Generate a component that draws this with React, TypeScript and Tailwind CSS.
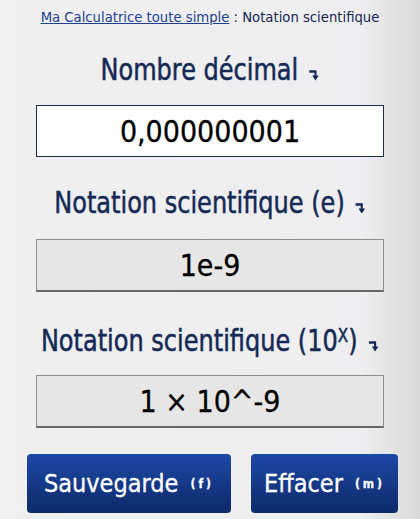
const cond = { fontFamily: '"DejaVu Sans Condensed", "DejaVu Sans", sans-serif' };

function TurnArrow() {
    return (
        <svg width="12" height="11" viewBox="0 0 12 11" className="ml-[12px] mt-[10px] inline-block shrink-0" fill="none">
            <path d="M0.5 1.5 H7.5 V7" stroke="#142a55" strokeWidth="2.4" />
            <path d="M3.8 5.6 L7.5 10.5 L11.2 5.6 Z" fill="#142a55" />
        </svg>
    );
}

function Heading({ children }: { children: React.ReactNode }) {
    return (
        <h2 className="flex h-[40px] items-center justify-center text-[30px] leading-[40px] text-[#142a55] [-webkit-text-stroke:0.5px_#142a55]">
            <span className="flex scale-x-[0.89] items-center whitespace-nowrap">
                <span>{children}</span>
                <TurnArrow />
            </span>
        </h2>
    );
}

function ResultBox({ value }: { value: string }) {
    return (
        <div className="mx-[36px] flex h-[53px] items-center justify-center border border-[#8d8d8d] border-b-2 border-b-[#666] bg-[#e6e6e6] text-[30px] text-black [-webkit-text-stroke:0.3px_black]">
            {value}
        </div>
    );
}

export default function App() {
    return (
        <div
            className="flex h-[519px] w-[420px] flex-col overflow-hidden bg-[linear-gradient(to_right,#efeff0_0%,#eeeef0_86%,#d9d9d9_100%)]"
            style={cond}
        >
            <p className="h-[34px] pt-[8px] text-center text-[14.7px] leading-[18px] text-[#14264f]">
                <a href="#" className="text-[#1c3f8f] underline">Ma Calculatrice toute simple</a> : Notation scientifique
            </p>

            <div className="mt-[16px]">
                <Heading>Nombre décimal</Heading>
            </div>
            <div className="mx-[36px] mt-[15px] flex h-[52px] items-center justify-center border border-[#1b2c55] bg-white text-[30px] text-black [-webkit-text-stroke:0.3px_black]">
                0,000000001
            </div>

            <div className="mt-[26px]">
                <Heading>Notation scientifique (e)</Heading>
            </div>
            <div className="mt-[16px]">
                <ResultBox value="1e-9" />
            </div>

            <div className="mt-[29px]">
                <Heading>
                    Notation scientifique (10<sup className="text-[19px]">X</sup>)
                </Heading>
            </div>
            <div className="mt-[14px]">
                <ResultBox value="1 × 10^-9" />
            </div>

            <div className="mt-[26px] flex gap-[20px] pl-[27px]">
                <button className="flex h-[59px] w-[204px] items-center justify-center gap-[12px] rounded-[4px] bg-[linear-gradient(to_bottom,#1d49a6,#0d2a68)] text-[25px] text-white [-webkit-text-stroke:0.3px_white]">
                    Sauvegarde <span className="text-[12px] font-bold tracking-[3px]">(f)</span>
                </button>
                <button className="flex h-[59px] w-[147px] items-center justify-center gap-[12px] rounded-[4px] bg-[linear-gradient(to_bottom,#1d49a6,#0d2a68)] text-[25px] text-white [-webkit-text-stroke:0.3px_white]">
                    Effacer <span className="text-[12px] font-bold tracking-[3px]">(m)</span>
                </button>
            </div>
        </div>
    );
}
